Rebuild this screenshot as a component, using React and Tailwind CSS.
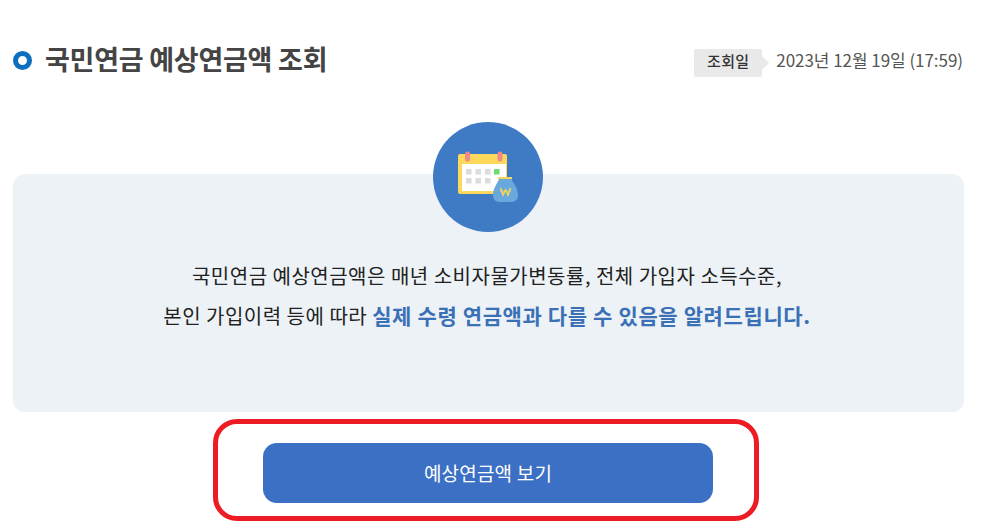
import React from 'react';

const font = { fontFamily: '"Noto Sans CJK KR", "Noto Sans", sans-serif' };

const CalendarBag = () => (
  <svg width="110" height="110" viewBox="0 0 110 110" fill="none">
    <rect x="25" y="32" width="49" height="40" rx="2" fill="#fdd85a" />
    <rect x="29" y="42" width="44" height="27" fill="#ffffff" />
    <rect x="32" y="29.5" width="5" height="10" rx="2.5" fill="#f08a8a" />
    <rect x="64.5" y="29.5" width="5" height="10" rx="2.5" fill="#f08a8a" />
    {[33, 42.5, 52].map((x) => (
      <rect key={x} x={x} y="47" width="5.5" height="5.5" fill="#dcdcdc" />
    ))}
    <rect x="61" y="47" width="5.5" height="5.5" fill="#6fdc6f" />
    {[33, 42.5, 52].map((x) => (
      <rect key={x} x={x} y="56" width="5.5" height="5.5" fill="#dcdcdc" />
    ))}
    <path d="M66 56h12c1 4 7 9 7 17 0 5-3 7-7 7H67c-4 0-7-2-7-7 0-8 6-13 6-17z" fill="#68a8dc" />
    <rect x="65" y="55" width="14" height="2" fill="#f4d55c" />
    <path d="M67.5 66l2.5 7 2.5-5 2.5 5 2.5-7" stroke="#f4d55c" strokeWidth="1.6" />
    <path d="M67 69h11" stroke="#f4d55c" strokeWidth="0.8" />
  </svg>
);

export default function App() {
  return (
    <div className="relative h-[527px] w-[990px] overflow-hidden bg-white pl-[13px] pr-[26px] pt-[40px]" style={font}>
      <div className="flex h-[40px] items-center justify-between">
        <div className="flex items-center gap-[13px]">
          <span className="size-[19px] rounded-full border-[5px] border-[#0b6fc0]" />
          <h1 className="-mt-[2px] text-[27px] font-bold tracking-[-0.25px] text-[#444444]">국민연금 예상연금액 조회</h1>
        </div>
        <div className="flex items-center">
          <span className="relative mt-[6px] flex h-[28px] w-[68px] items-center justify-center rounded-[2px] bg-[#e9e9e9] pb-[3px] text-[15px] font-medium tracking-[0.3px] text-[#333333]">
            조회일
            <span className="absolute left-full top-[7px] border-y-[7px] border-l-[7px] border-y-transparent border-l-[#e9e9e9]" />
          </span>
          <span className="ml-[14px] mr-[1px] text-[17px] tracking-[-0.05px] text-[#555555]">2023년 12월 19일 (17:59)</span>
        </div>
      </div>

      <div className="relative z-10 -mb-[58px] ml-[420px] mt-[42px] size-[110px] overflow-hidden rounded-full bg-[#3f7ac5]">
        <CalendarBag />
      </div>

      <div className="flex h-[238px] flex-col items-center rounded-[12px] bg-[#edf2f6] pr-[3px] pt-[82px] text-[20px] leading-[40px] text-[#222222]">
        <p className="tracking-[0.5px]">국민연금 예상연금액은 매년 소비자물가변동률, 전체 가입자 소득수준,</p>
        <p className="-mt-[1px]">
          <span className="tracking-[0.5px]">본인 가입이력 등에 따라 </span>
          <strong className="text-[21px] font-bold tracking-[0.62px] text-[#3a70b5]">실제 수령 연금액과 다를 수 있음을 알려드립니다.</strong>
        </p>
      </div>

      <button className="ml-[250px] mt-[31px] flex h-[60px] w-[450px] items-center justify-center rounded-[14px] bg-[#3c70c4] text-[19px] tracking-[0.2px] text-white">
        예상연금액 보기
      </button>

      {/* red annotation ring */}
      <div className="absolute left-[213px] top-[419px] h-[102px] w-[546px] rounded-[24px] border-[5px] border-[#ed1c24]" />
    </div>
  );
}
